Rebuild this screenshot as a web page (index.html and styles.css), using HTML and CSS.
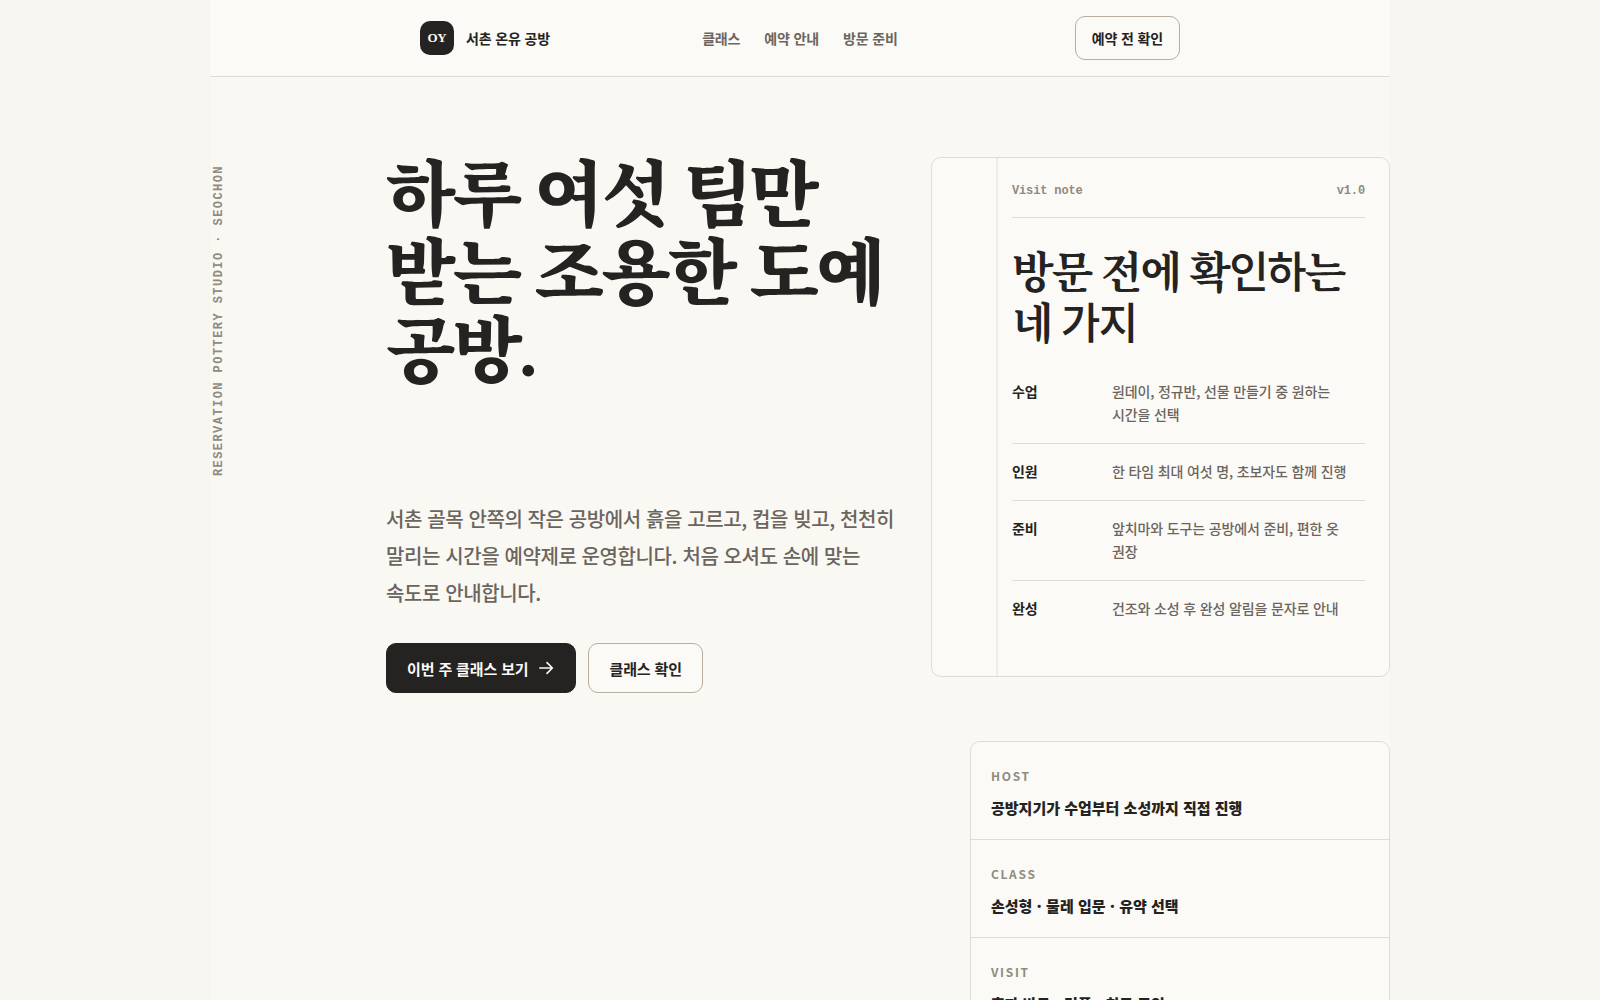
FILE: index.html
```html
<!DOCTYPE html>
<html lang="ko">
<head>
  <meta charset="UTF-8">
  <meta name="viewport" content="width=device-width, initial-scale=1.0">
  <title>서촌 온유 공방</title>
  <link rel="stylesheet" href="styles.css">
</head>
<body>
  <div class="page">
    <header class="topbar">
      <div class="topbar-inner">
        <a class="brand" href="#top">
          <span class="brand-mark">OY</span>
          <span>서촌 온유 공방</span>
        </a>
        <nav class="nav">
          <a href="#classes">클래스</a>
          <a href="#booking">예약 안내</a>
          <a href="#visit">방문 준비</a>
        </nav>
        <button class="btn btn-small" type="button">예약 전 확인</button>
      </div>
    </header>

    <main class="hero" id="top">
      <p class="side-label">RESERVATION POTTERY STUDIO · SEOCHON</p>

      <section class="intro">
        <h1>하루 여섯 팀만 받는 조용한 도예 공방.</h1>
        <p class="lead">서촌 골목 안쪽의 작은 공방에서 흙을 고르고, 컵을 빚고, 천천히 말리는 시간을 예약제로 운영합니다. 처음 오셔도 손에 맞는 속도로 안내합니다.</p>
        <div class="actions">
          <button class="btn btn-primary" type="button">
            이번 주 클래스 보기
            <svg width="18" height="18" viewBox="0 0 18 18" fill="none" stroke="currentColor" stroke-width="1.6" stroke-linecap="round" stroke-linejoin="round" aria-hidden="true">
              <path d="M2.8 9h12.4M10 3.6 15.4 9 10 14.4"/>
            </svg>
          </button>
          <button class="btn" type="button">클래스 확인</button>
        </div>
      </section>

      <aside class="note" id="visit">
        <div class="note-head">
          <span>Visit note</span>
          <span>v1.0</span>
        </div>
        <h2>방문 전에 확<span class="plain">인하</span>는 네 <span class="plain">가지</span></h2>
        <dl class="note-list">
          <div class="note-row">
            <dt>수업</dt>
            <dd>원데이, 정규반, 선물 만들기 중 원하는 시간을 선택</dd>
          </div>
          <div class="note-row">
            <dt>인원</dt>
            <dd>한 타임 최대 여섯 명, 초보자도 함께 진행</dd>
          </div>
          <div class="note-row">
            <dt>준비</dt>
            <dd>앞치마와 도구는 공방에서 준비, 편한 옷 권장</dd>
          </div>
          <div class="note-row">
            <dt>완성</dt>
            <dd>건조와 소성 후 완성 알림을 문자로 안내</dd>
          </div>
        </dl>
      </aside>

      <dl class="facts" id="classes">
        <div class="fact">
          <dt>HOST</dt>
          <dd>공방지기가 수업부터 소성까지 직접 진행</dd>
        </div>
        <div class="fact">
          <dt>CLASS</dt>
          <dd>손성형 · 물레 입문 · 유약 선택</dd>
        </div>
        <div class="fact">
          <dt>VISIT</dt>
          <dd>혼자 방문 · 커플 · 친구 모임</dd>
        </div>
      </dl>
    </main>
  </div>
</body>
</html>
```
FILE: styles.css
```css
:root {
  --bg: #f6f5f0;
  --page: #f9f8f3;
  --card: #fbfaf6;
  --ink: #242321;
  --body: #6b655e;
  --muted: #918a7f;
  --line: #deddd5;
  --line-strong: #b9ad9c;
  --sans: "Noto Sans CJK KR", sans-serif;
  --serif: "Liberation Serif", "Noto Serif CJK KR", "Noto Sans CJK KR", serif;
  --mono: "Liberation Mono", monospace;
}

* {
  box-sizing: border-box;
}

body {
  margin: 0;
  background: var(--bg);
  color: var(--ink);
  font-family: var(--sans);
  font-size: 14px;
  line-height: 23px;
  letter-spacing: -0.01em;
  word-break: keep-all;
}

h1, h2, p, dl, dt, dd {
  margin: 0;
}

a {
  color: inherit;
  text-decoration: none;
}

.page {
  max-width: 1180px;
  min-height: 100vh;
  margin: 0 auto;
  background: var(--page);
}

/* header */
.topbar {
  background: var(--card);
  border-bottom: 1px solid var(--line);
}

.topbar-inner {
  display: grid;
  grid-template-columns: 1fr auto 1fr;
  align-items: center;
  max-width: 760px;
  min-height: 76px;
  margin: 0 auto;
}

.brand {
  display: flex;
  align-items: center;
  gap: 12px;
  font-weight: 700;
}

.brand-mark {
  display: grid;
  place-items: center;
  width: 34px;
  height: 34px;
  border-radius: 10px;
  background: var(--ink);
  color: var(--card);
  font: 700 13px "Liberation Serif", serif;
}

.nav {
  display: flex;
  gap: 24px;
  color: var(--body);
  font-weight: 600;
}

.btn {
  display: inline-flex;
  align-items: center;
  gap: 9px;
  min-height: 50px;
  padding: 0 20px;
  border: 1px solid var(--line-strong);
  border-radius: 10px;
  background: var(--card);
  color: var(--ink);
  font: 700 15px var(--sans);
  letter-spacing: inherit;
  cursor: pointer;
}

.btn-small {
  justify-self: end;
  min-height: 44px;
  padding: 0 16px;
  font-size: 14px;
}

.btn-primary {
  border-color: var(--ink);
  background: var(--ink);
  color: var(--card);
}

/* hero */
.hero {
  display: grid;
  grid-template-columns: 144px minmax(0, 513fr) minmax(0, 459fr);
  column-gap: 32px;
  row-gap: 48px;
  padding: 80px 0;
}

.side-label {
  justify-self: start;
  align-self: start;
  padding-bottom: 8px;
  color: var(--muted);
  font: 700 12px/18px var(--mono);
  letter-spacing: 0.12em;
  writing-mode: vertical-rl;
  transform: rotate(180deg);
}

.intro h1 {
  font-family: var(--serif);
  font-size: 72px;
  font-weight: 900;
  line-height: 78px;
  letter-spacing: -0.04em;
}

.lead {
  margin: 109px 0 32px;
  color: var(--body);
  font-size: 20px;
  font-weight: 500;
  line-height: 37px;
  letter-spacing: -0.02em;
}

.actions {
  display: flex;
  gap: 12px;
}

.note {
  position: relative;
  align-self: start;
  min-height: 520px;
  padding: 24px 24px 24px 80px;
  border: 1px solid var(--line);
  border-radius: 10px;
  background: var(--card);
}

/* binding line down the left of the note */
.note::before {
  content: "";
  position: absolute;
  top: 0;
  bottom: 0;
  left: 64px;
  width: 2px;
  background: #eeece5;
}

.note-head {
  display: flex;
  justify-content: space-between;
  padding-bottom: 16px;
  border-bottom: 1px solid var(--line);
  color: var(--muted);
  font: 700 12px/19px var(--mono);
}

.note h2 {
  margin: 30px 0 14px;
  font-family: var(--serif);
  font-size: 43px;
  font-weight: 700;
  line-height: 50px;
  letter-spacing: -0.04em;
}

.note h2 .plain {
  font-family: var(--sans);
  font-weight: 500;
  line-height: 1;
}

.note-row {
  display: grid;
  grid-template-columns: 84px 1fr;
  gap: 16px;
  padding: 16px 0 17px;
  border-bottom: 1px solid var(--line);
}

.note-row:last-child {
  border-bottom: 0;
}

.note-row dt {
  font-weight: 700;
}

.note-row dd {
  color: var(--body);
  font-weight: 500;
}

.facts {
  grid-column: 2 / -1;
  justify-self: end;
  width: 100%;
  max-width: 420px;
  border: 1px solid var(--line);
  border-radius: 10px;
  background: var(--card);
}

.fact {
  padding: 24px 20px 20px;
  border-bottom: 1px solid var(--line);
}

.fact:last-child {
  border-bottom: 0;
}

.fact dt {
  margin-bottom: 10px;
  color: var(--muted);
  font-size: 12px;
  font-weight: 700;
  line-height: 20px;
  letter-spacing: 0.14em;
}

.fact dd {
  font-size: 15px;
  font-weight: 800;
  letter-spacing: 0;
}

@media (max-width: 900px) {
  .topbar-inner {
    padding: 0 20px;
  }

  .hero {
    grid-template-columns: minmax(0, 1fr);
    padding: 40px 20px;
  }

  .side-label {
    display: none;
  }

  .intro h1 {
    font-size: 44px;
    line-height: 50px;
  }

  .lead {
    margin-top: 32px;
  }

  .facts {
    grid-column: 1;
    max-width: none;
  }
}
```
